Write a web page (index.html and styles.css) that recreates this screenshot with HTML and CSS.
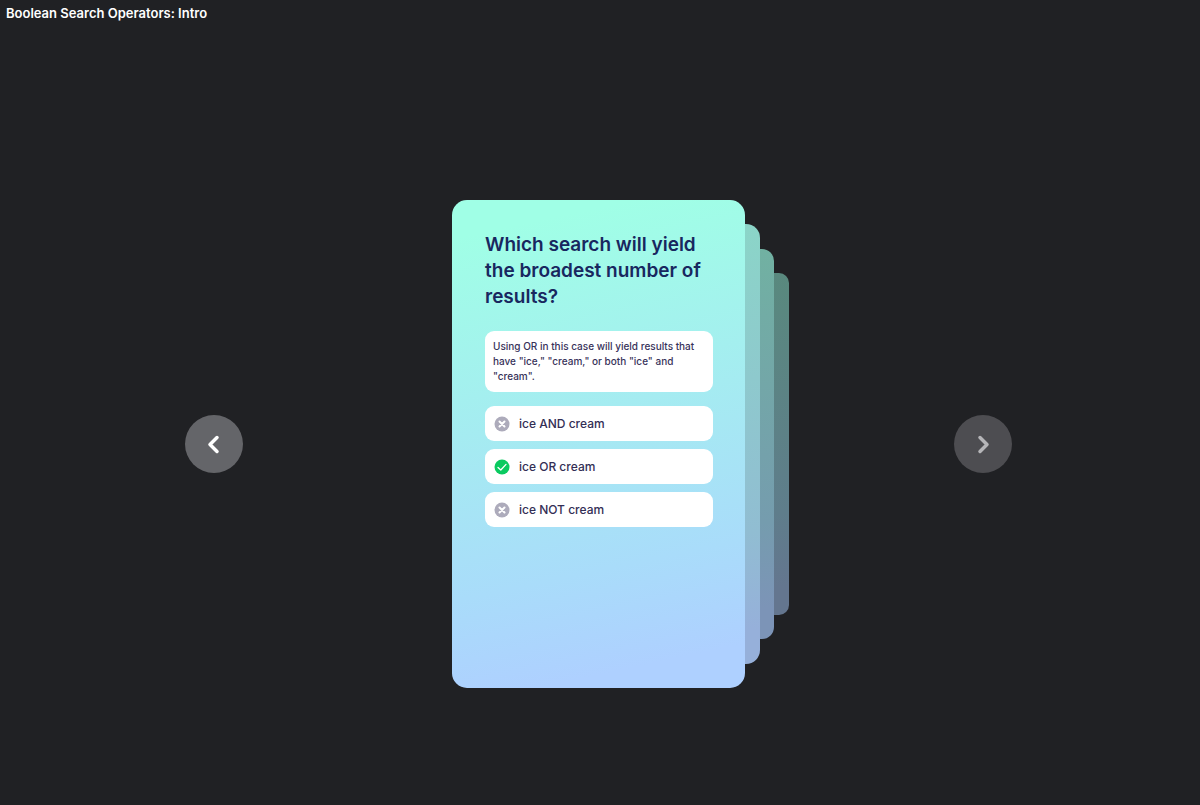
FILE: index.html
```html
<!DOCTYPE html>
<html lang="en">
<head>
<meta charset="utf-8">
<meta name="viewport" content="width=device-width, initial-scale=1">
<title>Boolean Search Operators: Intro</title>
<link rel="stylesheet" href="styles.css">
</head>
<body>
<header class="header"><h1 class="title">Boolean Search Operators: Intro</h1></header>
<main class="stage">
  <div class="carousel">
    <button class="nav" type="button" aria-label="Previous">
      <svg viewBox="0 0 58 58"><path d="M32 22.500L25 29.500L32 36.500"/></svg>
    </button>
    <div class="deck">
      <div class="layer layer-third"></div>
      <div class="layer layer-second"></div>
      <div class="layer layer-first"></div>
      <section class="card">
        <h2 class="question">Which search will yield the broadest number of results?</h2>
        <p class="feedback">Using OR in this case will yield results that have "ice," "cream," or both "ice" and "cream".</p>
        <div class="options">
          <button class="option" type="button">
            <svg class="mark" viewBox="0 0 16 16"><circle class="wrong" cx="8" cy="8" r="7.500"/><path class="cross" d="M5.500 5.500L10.500 10.500M10.500 5.500L5.500 10.500"/></svg>
            <span>ice AND cream</span>
          </button>
          <button class="option" type="button">
            <svg class="mark" viewBox="0 0 16 16"><circle class="right" cx="8" cy="8" r="7.500"/><path class="tick" d="M4 8.400L6.800 11L12 5.400"/></svg>
            <span>ice OR cream</span>
          </button>
          <button class="option" type="button">
            <svg class="mark" viewBox="0 0 16 16"><circle class="wrong" cx="8" cy="8" r="7.500"/><path class="cross" d="M5.500 5.500L10.500 10.500M10.500 5.500L5.500 10.500"/></svg>
            <span>ice NOT cream</span>
          </button>
        </div>
      </section>
    </div>
    <button class="nav nav-next" type="button" aria-label="Next">
      <svg viewBox="0 0 58 58"><path d="M26 22.500L33 29.500L26 36.500"/></svg>
    </button>
  </div>
</main>
</body>
</html>
```
FILE: styles.css
```css
* {
  box-sizing: border-box;
}

body {
  display: flex;
  flex-direction: column;
  min-height: 100vh;
  margin: 0;
  background: #202124;
  font-family: Inter, "Liberation Sans", sans-serif;
}

.header {
  padding: 3px 6px 4px;
}

.title {
  margin: 0;
  color: #fff;
  font-size: 13px;
  font-weight: 600;
  line-height: 20px;
}

.stage {
  display: flex;
  flex: 1;
  align-items: center;
  justify-content: center;
  padding: 56px 16px 0 13px;
}

.carousel {
  display: flex;
  align-items: center;
  justify-content: space-between;
  width: 100%;
  max-width: 827px;
}

.nav {
  width: 58px;
  height: 58px;
  padding: 0;
  border: 0;
  border-radius: 50%;
  background: #646569;
  color: #fff;
  cursor: pointer;
}

.nav-next {
  background: #4d4d51;
  color: #b5b5b8;
}

.nav svg {
  display: block;
  fill: none;
  stroke: currentColor;
  stroke-width: 3.5;
  stroke-linecap: round;
  stroke-linejoin: round;
}

.deck {
  position: relative;
  width: 293px;
}

.card {
  position: relative;
  min-height: 488px;
  padding: 32px 32px 32px 33px;
  border-radius: 15px;
  background: linear-gradient(168deg, #a0ffe6 7%, #a9dcfa 73%, #aed0ff 92%);
}

.layer {
  position: absolute;
  width: 60px;
}

.layer-first {
  top: 24px;
  right: -15px;
  bottom: 24px;
  border-radius: 14px;
  background: linear-gradient(#8bd5c8, #91bdd2 70%, #96b0da 92%);
}

.layer-second {
  top: 49px;
  right: -29px;
  bottom: 49px;
  border-radius: 12px;
  background: linear-gradient(#71b1a2, #759cae 70%, #7c94b7 92%);
}

.layer-third {
  top: 73px;
  right: -44px;
  bottom: 73px;
  border-radius: 10px;
  background: linear-gradient(#59897e, #5f7d8b 70%, #64768f 92%);
}

.question {
  margin: 0 0 21px;
  color: #18275f;
  font-size: 19px;
  font-weight: 600;
  line-height: 26px;
}

.feedback {
  margin: 0 0 14px;
  padding: 8px;
  border-radius: 9px;
  background: #fff;
  color: #37325a;
  font-size: 10px;
  font-weight: 500;
  line-height: 15px;
}

.options {
  display: flex;
  flex-direction: column;
  gap: 8px;
}

.option {
  display: flex;
  align-items: center;
  gap: 9px;
  width: 100%;
  height: 35px;
  padding: 0 9px;
  border: 0;
  border-radius: 9px;
  background: #fff;
  color: #332e55;
  font: 500 12px/18px Inter, "Liberation Sans", sans-serif;
  text-align: left;
  cursor: pointer;
}

.mark {
  flex: none;
  width: 16px;
  height: 16px;
  fill: none;
  stroke-linecap: round;
  stroke-linejoin: round;
}

.wrong {
  fill: #adabbb;
}

.right {
  fill: #0aca60;
}

.cross {
  stroke: #fff;
  stroke-width: 2;
}

.tick {
  stroke: #fff;
  stroke-width: 1.3;
}
```
